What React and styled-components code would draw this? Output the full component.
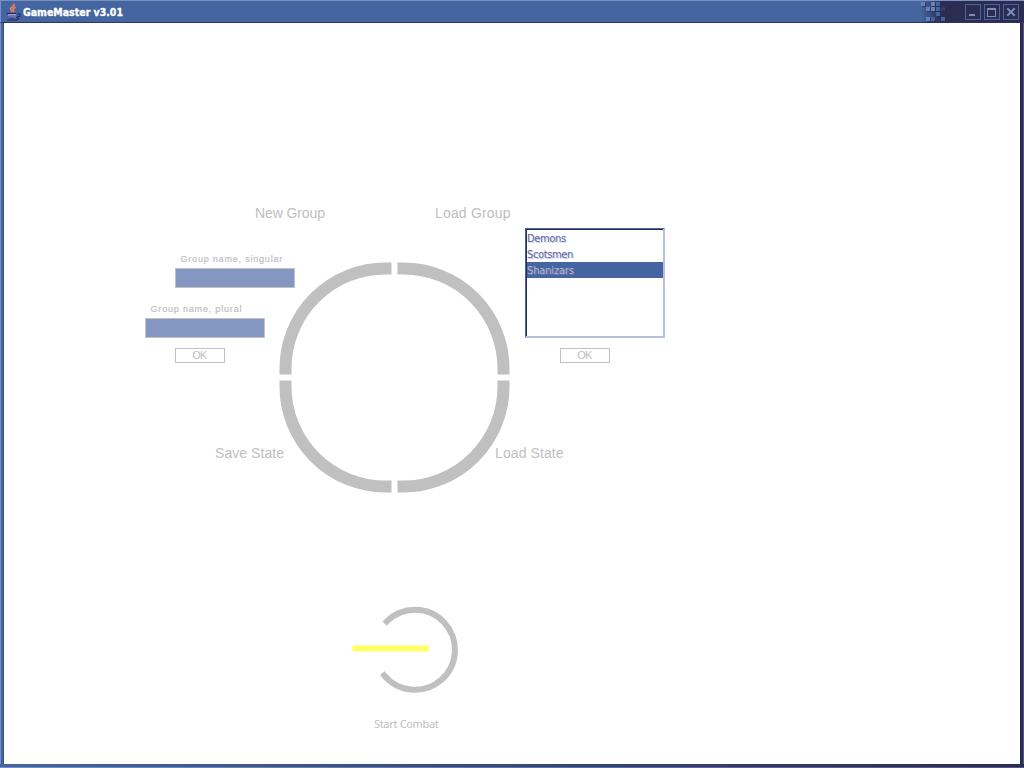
import React from "react";
import styled, { createGlobalStyle } from "styled-components";

const Global = createGlobalStyle`
  body { margin: 0; background: #fff; }
  * { box-sizing: border-box; }
`;

const Window = styled.main`
  display: grid;
  grid-template-rows: 23px 741px 4px;
  width: 1024px;
  height: 768px;
  overflow: hidden;
  font-family: "Liberation Sans", Arial, sans-serif;
`;

const TitleBar = styled.header`
  display: flex;
  align-items: center;
  padding: 1px 5px 0 5px;
  border-top: 1px solid #7a90c0;
  border-left: 1px solid #7a90c0;
  border-bottom: 1px solid #2c3564;
  background: linear-gradient(90deg, #44659f 0, #44659f 920px, #2b2c50 941px);
`;

const Title = styled.h1`
  margin: 0 auto 0 1px;
`;

const TitleText = styled.svg`
  display: block;
  font: 700 11px "DejaVu Sans Condensed", "DejaVu Sans", sans-serif;
  font-stretch: condensed;
  fill: #fff;
  stroke: #fff;
  stroke-width: 0.35px;
`;

const Controls = styled.div`
  display: flex;
  gap: 3px;
  margin-left: 19px;
`;

const Control = styled.button`
  display: block;
  width: 16px;
  height: 16px;
  padding: 0;
  border: 1px solid #44659f;
  background: #2b2c50;
  svg { display: block; }
`;

const Middle = styled.div`
  display: grid;
  grid-template-columns: 4px 1016px 4px;
`;

const Edge = styled.div`
  background: ${(p) => (p.$right ? "#2b2c54" : "#44659f")};
  border-left: ${(p) => (p.$right ? "0" : "1px solid #7a90c0")};
  border-right: 1px solid ${(p) => (p.$right ? "#555779" : "#34518a")};
`;

const BottomEdge = styled.footer`
  background:
    linear-gradient(90deg, #7a90c0, #555779) bottom / 100% 1px no-repeat,
    linear-gradient(90deg, #44659f, #2b2c54);
`;

const Canvas = styled.section`
  position: relative;
  background: #fff;
`;

const Drawing = styled.svg`
  position: absolute;
  left: -4px;
  top: -23px;
  fill: none;
  stroke: #c0c0c0;
  stroke-linecap: square;
`;

const Node = styled.div`
  position: absolute;
  left: ${(p) => p.$x - 4}px;
  top: ${(p) => p.$y - 23}px;
`;

const MenuLabel = styled.div`
  color: #c0c0c0;
  font-size: 14px;
  line-height: 16px;
  letter-spacing: ${(p) => p.$spacing || 0}px;
  white-space: nowrap;
`;

const Caption = styled.label`
  display: block;
  padding-left: 5.5px;
  height: 14px;
  color: #c0c0c0;
  font-size: 9px;
  line-height: 10px;
  letter-spacing: ${(p) => p.$spacing}px;
  -webkit-text-stroke: 0.2px #c0c0c0;
  white-space: nowrap;
`;

const Input = styled.input`
  display: block;
  width: 120px;
  height: 20px;
  padding: 0 3px;
  border: 1px solid #c0c0c0;
  border-radius: 0;
  background: #8497c3;
  outline: none;
`;

const OkButton = styled.button`
  display: block;
  width: 50px;
  height: 15px;
  padding: 0 1px 0 0;
  border: 1px solid #c0c0c0;
  background: #fff;
  color: #c0c0c0;
  font: 11px/13px "Liberation Sans", sans-serif;
  letter-spacing: -0.8px;
`;

const List = styled.ul`
  width: 140px;
  height: 110px;
  margin: 0;
  padding: 1px 0 0 1px;
  list-style: none;
  border: solid;
  border-width: 1px 2px 2px 1px;
  border-color: #44659f #b4c0dc #b4c0dc #44659f;
  box-shadow: inset 1px 1px #2b2c50;
`;

const Item = styled.li`
  height: 16px;
  padding-top: 1px;
  background: ${(p) => (p.$selected ? "#44659f" : "transparent")};
  color: ${(p) => (p.$selected ? "#b3b3d8" : "#6464a0")};
  font: 11px/15px "DejaVu Sans Condensed", "DejaVu Sans", sans-serif;
  font-stretch: condensed;
  letter-spacing: ${(p) => (p.$selected ? "-0.15px" : "-0.35px")};
  text-shadow: 1px 1px ${(p) => (p.$selected ? "#7d75a8" : "#c9cee8")};
`;

const Combat = styled.div`
  color: #c0c0c0;
  font: 11px/14px "Noto Sans", sans-serif;
  letter-spacing: -0.32px;
  white-space: nowrap;
`;

const pixels = [
  [0, 0, "#6882c0"], [10, 0, "#6882c0"], [15, 0, "#44659f"],
  [5, 5, "#6882c0"], [10, 5, "#6882c0"], [15, 5, "#44659f"], [20, 5, "#3a3866"],
  [15, 10, "#44659f"], [5, 15, "#6882c0"], [10, 15, "#44659f"], [20, 15, "#44659f"],
];

function JavaCup() {
  return (
    <svg width="16" height="18" viewBox="-1 0 16 18" fill="none">
      <path d="M7 0.5v2L3.5 5.5 5 9M8.5 4L6 6.2 7 9" stroke="#ee795c" strokeWidth="1.7" />
      <path d="M.5 10h9l-1 4.5h-6z" fill="#c3c7ea" />
      <path d="M-.5 10.7h10M2 13h7M2.5 15h5M0 17h9l3-1.5M10 11h2.8v2.2L9 14.5" stroke="#25256b" strokeWidth="1.2" />
    </svg>
  );
}

export default function App() {
  return (
    <Window>
      <Global />
      <TitleBar>
        <JavaCup />
        <Title>
          <TitleText width="110" height="15">
            <text x="0" y="11" textLength="100" lengthAdjust="spacingAndGlyphs">GameMaster v3.01</text>
          </TitleText>
        </Title>
        <svg width="26" height="20" viewBox="-1 0 26 20">
          {pixels.map(([x, y, c]) => (
            <g key={`${x}-${y}`}>
              <path d={`M${x + 1} ${y + 1}h4v4h-4z`} fill="#24254a" opacity=".6" />
              <path d={`M${x} ${y}h4v4h-4z`} fill={c} />
            </g>
          ))}
        </svg>
        <Controls>
          <Control aria-label="Minimize">
            <svg width="14" height="14"><path d="M3 9h6v2H3z" fill="#7b8dbb" /></svg>
          </Control>
          <Control aria-label="Maximize">
            <svg width="14" height="14"><path d="M2 3h9v9H2zM3 5v6h7V5z" fill="#7b8dbb" fillRule="evenodd" /></svg>
          </Control>
          <Control aria-label="Close">
            <svg width="14" height="14"><path d="M4 4l6 6M10 4l-6 6" stroke="#7b8dbb" strokeWidth="2" strokeLinecap="square" /></svg>
          </Control>
        </Controls>
      </TitleBar>
      <Middle>
        <Edge />
        <Canvas>
          <Drawing width="1024" height="768">
            <g strokeWidth="12">
              <path d="M285.5 368.5A100 100 0 0 1 385.5 268.5" />
              <path d="M403.5 268.5A100 100 0 0 1 503.5 368.5" />
              <path d="M503.5 386.5A100 100 0 0 1 403.5 486.5" />
              <path d="M385.5 486.5A100 100 0 0 1 285.5 386.5" />
            </g>
            <path d="M386.8 621.4A40 40 0 1 1 384.2 675.4" strokeWidth="6" />
            <path d="M355.5 648.5H425.5" stroke="#ffff66" strokeWidth="6" />
          </Drawing>
          <Node $x={255} $y={205}><MenuLabel $spacing={-0.1}>New Group</MenuLabel></Node>
          <Node $x={435} $y={205}><MenuLabel $spacing={0.17}>Load Group</MenuLabel></Node>
          <Node $x={215} $y={445}><MenuLabel $spacing={0.05}>Save State</MenuLabel></Node>
          <Node $x={495} $y={445}><MenuLabel $spacing={0.1}>Load State</MenuLabel></Node>
          <Node $x={175} $y={254}><Caption $spacing={0.8}>Group name, singular</Caption><Input /></Node>
          <Node $x={145} $y={304}><Caption $spacing={0.82}>Group name, plural</Caption><Input /></Node>
          <Node $x={175} $y={348}><OkButton>OK</OkButton></Node>
          <Node $x={525} $y={228}>
            <List><Item>Demons</Item><Item>Scotsmen</Item><Item $selected>Shanizars</Item></List>
          </Node>
          <Node $x={560} $y={348}><OkButton>OK</OkButton></Node>
          <Node $x={374} $y={717}><Combat>Start Combat</Combat></Node>
        </Canvas>
        <Edge $right />
      </Middle>
      <BottomEdge />
    </Window>
  );
}
